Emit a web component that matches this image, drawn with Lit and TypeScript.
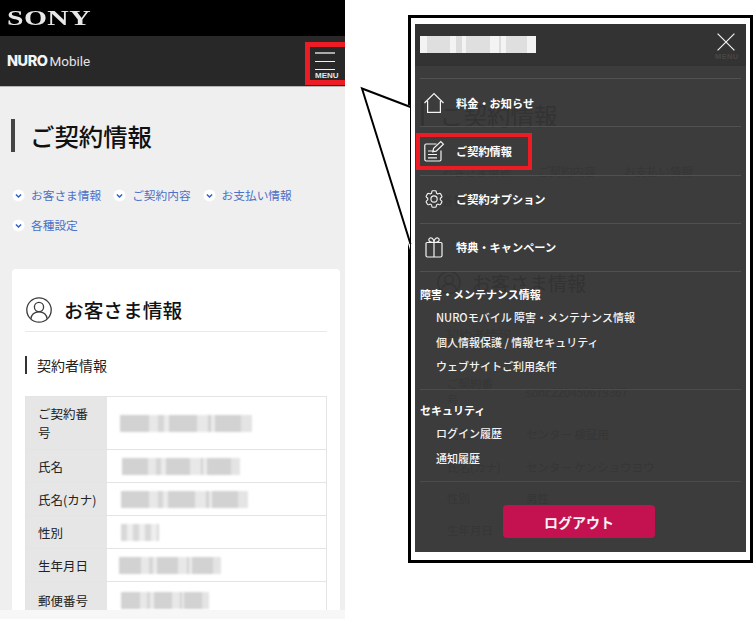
import { LitElement, html, css, svg } from "lit";
import { customElement } from "lit/decorators.js";

const chevron = html`<svg class="chev" viewBox="0 0 14 14"><circle cx="7" cy="7" r="6.5" fill="#fff"/><path d="M4.2 5.8 7 8.6l2.8-2.8" fill="none" stroke="#2a5fc8" stroke-width="1.5"/></svg>`;

const person = html`<svg class="person" viewBox="0 0 26 26" fill="none" stroke="#3c3c3c" stroke-width="1.3"><circle cx="13" cy="13" r="12.2"/><circle cx="13" cy="10" r="4.6"/><path d="M4.8 22c.6-4.6 4-7.2 8.2-7.2s7.6 2.6 8.2 7.2"/></svg>`;

const icons: Record<string, unknown> = {
  home: svg`<path d="M1.5 11 11 1.600 20.500 11M4.600 9v11.400h12.800V9"/>`,
  edit: svg`<path d="M13.500 4H3.200A1.400 1.400 0 0 0 1.800 5.400v14.200A1.400 1.400 0 0 0 3.200 21h13.400a1.400 1.400 0 0 0 1.400-1.400V10.500M5 11h6M5 14.500h9M5 17.800h9"/><path d="M9.800 11.800l.8-3.400 7.200-6.800 2.600 2.600-7.200 6.900z"/>`,
  gear: svg`<g transform="scale(.92)"><path d="M9.594 3.94c.09-.542.56-.94 1.11-.94h2.593c.55 0 1.02.398 1.11.94l.213 1.281c.063.374.313.686.645.87.074.04.147.083.22.127.325.196.72.257 1.075.124l1.217-.456a1.125 1.125 0 0 1 1.37.49l1.296 2.247a1.125 1.125 0 0 1-.26 1.431l-1.003.827c-.293.241-.438.613-.43.992a7.723 7.723 0 0 1 0 .255c-.008.378.137.75.43.991l1.004.827c.424.35.534.955.26 1.43l-1.298 2.247a1.125 1.125 0 0 1-1.369.491l-1.217-.456c-.355-.133-.75-.072-1.076.124a6.47 6.47 0 0 1-.22.128c-.331.183-.581.495-.644.869l-.213 1.281c-.09.543-.56.94-1.11.94h-2.594c-.55 0-1.019-.398-1.11-.94l-.213-1.281c-.062-.374-.312-.686-.644-.87a6.52 6.52 0 0 1-.22-.127c-.325-.196-.72-.257-1.076-.124l-1.217.456a1.125 1.125 0 0 1-1.369-.49l-1.297-2.247a1.125 1.125 0 0 1 .26-1.431l1.004-.827c.292-.24.437-.613.43-.991a6.932 6.932 0 0 1 0-.255c.007-.38-.138-.751-.43-.992l-1.004-.827a1.125 1.125 0 0 1-.26-1.43l1.297-2.247a1.125 1.125 0 0 1 1.37-.491l1.216.456c.356.133.751.072 1.076-.124.072-.044.146-.086.22-.128.332-.183.582-.495.644-.869l.214-1.28Z"/><circle cx="12" cy="12" r="3.400"/></g>`,
  gift: svg`<path d="M4 6.500h14a1 1 0 0 1 1 1v12a1.500 1.500 0 0 1-1.500 1.500h-13A1.500 1.500 0 0 1 3 19.500v-12a1 1 0 0 1 1-1ZM11 6.500V21M11 6.500C9 6.500 5.800 6.500 5.800 3.800 5.800 1.800 8 1.400 9.200 2.300 10.500 3.200 11 5 11 6.500ZM11 6.500c2 0 5.200 0 5.200-2.700 0-2-2.200-2.400-3.400-1.500C11.500 3.200 11 5 11 6.500Z"/>`,
};

const navItems = [
  ["home", "料金・お知らせ"],
  ["edit", "ご契約情報"],
  ["gear", "ご契約オプション"],
  ["gift", "特典・キャンペーン"],
];

const rows: [string, number, number, number][] = [
  ["ご契約番号", 132, 13, 52],
  ["氏名", 118, 15, 32],
  ["氏名(カナ)", 127, 14, 32],
  ["性別", 38, 14, 32],
  ["生年月日", 102, 12, 32],
  ["郵便番号", 88, 14, 36],
];

const ghosts: [string, number, number, string][] = [
  ["ご契約情報", 440, 115, "big"],
  ["お客さま情報", 442, 171, "sm"],
  ["ご契約内容", 538, 171, "sm"],
  ["お支払い情報", 624, 171, "sm"],
  ["各種設定", 442, 200, "sm"],
  ["お客さま情報", 472, 282, "mid"],
  ["契約者情報", 446, 334, "sm2"],
  ["ご契約番", 447, 383, "sm"],
  ["号", 447, 400, "sm"],
  ["sonc220450679367", 526, 392, "sm"],
  ["氏名", 447, 434, "sm"],
  ["センター 検証用", 526, 434, "sm"],
  ["氏名(カナ)", 447, 467, "sm"],
  ["センター ケンショウヨウ", 526, 467, "sm"],
  ["性別", 447, 498, "sm"],
  ["男性", 526, 498, "sm"],
  ["生年月日", 447, 530, "sm"],
];

@customElement("app-root")
export class AppRoot extends LitElement {
  static styles = css`
    :host { display: block; width: 754px; height: 619px; background: #fff; overflow: hidden; position: relative; font-family: "Noto Sans CJK JP", "Noto Sans", sans-serif; }
    .root { display: grid; grid-template-columns: 345px 1fr; height: 619px; }

    .phone { height: 610px; overflow: hidden; background: #efefef; display: flex; flex-direction: column; }
    .sony { flex: none; height: 36px; background: #000; display: flex; align-items: center; padding-left: 7px; }
    .sony span { font: bold 20px "Liberation Serif", serif; color: #e8e8e8; transform: scaleX(1.48); transform-origin: left center; letter-spacing: .3px; }
    .nuro { flex: none; height: 50px; background: #282828; border-bottom: 1px solid #b5b5b5; display: flex; align-items: flex-end; justify-content: space-between; box-sizing: content-box; }
    .logo { align-self: center; padding-left: 7px; margin-top: -2px; color: #e4e4e4; font: 13.500px Roboto, sans-serif; display: flex; align-items: baseline; gap: 2px; }
    .logo b { font: 800 14.500px Inter, sans-serif; letter-spacing: -.5px; color: #f4f4f4; }
    .menu { width: 30px; height: 28px; border: 5px solid #ed1c24; border-right-width: 0; padding-right: 5px; margin-bottom: 1px; background: #282828; display: flex; flex-direction: column; align-items: center; padding-top: 5px; box-sizing: content-box; gap: 7px; position: relative; }
    .menu i { display: block; width: 20px; height: 1px; background: #f0f0f0; flex: none; }
    .menu i:first-child { background: #aaa; height: 2px; }
    .menu em { position: absolute; bottom: 0; left: 5px; font: bold 8px "Liberation Sans", sans-serif; font-style: normal; color: #dfe8ee; line-height: 9px; }

    .title { margin: 32px 0 0 11px; border-left: 4px solid #444; height: 33px; padding-left: 16px; font-size: 24.400px; font-weight: 500; line-height: 33px; color: #111; text-indent: -1px; }
    .links { margin: 34px 0 0 12px; display: flex; flex-wrap: wrap; row-gap: 12px; column-gap: 12px; width: 310px; }
    .links a { display: flex; align-items: center; gap: 6px; font-size: 11.700px; line-height: 18px; color: #4a70c8; }
    .chev { width: 13px; height: 13px; }

    .card { margin: 35px 5px 0 12px; background: #fff; border-radius: 4px 4px 0 0; padding: 28px 13px 0; flex: 1; min-height: 0; }
    .card-head { display: flex; align-items: flex-start; gap: 12px; padding-left: 1px; border-bottom: 1px solid #e9e9e9; box-sizing: content-box; height: 34px; }
    .person { width: 26px; height: 26px; flex: none; }
    .card-head span { font-size: 19.700px; font-weight: 500; color: #111; line-height: 26px; }
    .sub { margin-top: 24px; border-left: 2px solid #333; height: 18px; padding-left: 10px; font-size: 14px; line-height: 18px; color: #222; }
    .table { margin-top: 22px; border: 1px solid #e4e4e4; border-bottom: 0; }
    .row { display: grid; grid-template-columns: 81px 1fr; border-bottom: 1px solid #e4e4e4; }
    .th { background: #e6e6e6; padding: 0 10px 0 12px; font-size: 12.500px; line-height: 19px; color: #222; display: flex; align-items: center; }
    .td { display: flex; align-items: center; }
    .blur { display: block; height: 17px; filter: blur(1.300px);
      background: linear-gradient(90deg, #d2d2d2 0 22%, #e8e8e8 22% 29%, #d6d6d6 29% 33%, #ebebeb 33% 37%, #d2d2d2 37% 58%, #e8e8e8 58% 67%, #d2d2d2 67% 69%, #ebebeb 69% 72%, #d2d2d2 72% 92%, #e4e4e4 92% 100%); }
    .blur.short { background: repeating-linear-gradient(90deg, #d8d8d8 0 6px, #eeeeee 6px 12px); }

    .box { margin: 15px 1px 0 63px; height: 548px; box-sizing: border-box; border: 3px solid #000; padding: 6px 4px 8px 4px; background: #fff; }
    .panel { height: 100%; width: 331px; background: #3c3c3c; display: flex; flex-direction: column; position: relative; overflow: hidden; }
    .p-head { flex: none; height: 42px; background: #333; display: flex; align-items: center; justify-content: space-between; position: relative; z-index: 1; }
    .p-name { margin: -1px 0 0 5px; width: 116px; height: 17px; filter: blur(.6px); background: linear-gradient(90deg, #f3f3f3 0 6%, #dfdfdf 6% 26%, #f3f3f3 26% 31%, #dcdcdc 31% 36%, #f3f3f3 36% 40%, #dfdfdf 40% 60%, #f3f3f3 60% 68%, #dcdcdc 68% 70%, #f3f3f3 70% 74%, #dfdfdf 74% 92%, #f3f3f3 92% 100%); }
    .close { position: relative; width: 30px; height: 42px; margin-right: 8px; }
    .close svg { position: absolute; left: 9px; top: 9px; width: 18px; height: 18px; }
    .close em { position: absolute; left: 7px; top: 28px; font: bold 7.500px "Liberation Sans", sans-serif; letter-spacing: .4px; color: #474747; }

    .nav { margin: 12px 5px 0; position: relative; z-index: 1; border-top: 1px solid #515151; flex: none; }
    .nav-item { height: 47.250px; border-bottom: 1px solid #515151; display: flex; align-items: center; color: #fff; font-size: 11.200px; font-weight: 700; padding-left: 3px; box-sizing: content-box; }
    .nav-item svg { width: 22px; height: 22px; margin-right: 11px; fill: none; stroke: #f4f4f4; stroke-width: 1.200; flex: none; }
    .section { margin: 0 5px; border-bottom: 1px solid #4c4c4c; position: relative; z-index: 1; color: #fff; padding-top: 13px; box-sizing: content-box; height: 104px; }
    .section.sec2 { height: 80px; padding-top: 11px; }
    .section h3 { margin: 0 0 2px; font-size: 11px; line-height: 18px; font-weight: 700; }
    .section p { margin: 0 0 0 16px; font-size: 11px; line-height: 24.500px; font-weight: 500; color: #f4f4f4; white-space: nowrap; }
    .logout { position: relative; z-index: 1; margin: 23px auto 0 88px; width: 152px; height: 33px; border-radius: 4px; background: #c41150; color: #f5f5f5; font-size: 14px; font-weight: 700; display: flex; align-items: center; justify-content: center; }
    .hl { position: absolute; left: 1px; top: 109px; width: 116px; height: 37px; box-sizing: border-box; border: 4px solid #ed1c24; z-index: 2; }

    .ghost { position: absolute; white-space: nowrap; color: #333; transform: translateY(-50%); }
    .ghost.big { font-size: 23.500px; }
    .ghost.sm { font-size: 11.500px; color: #363636; }
    .ghost.sm2 { font-size: 13px; color: #363636; }
    .ghost.mid { font-size: 19px; }
    .g-bar { position: absolute; left: 6px; top: 76px; width: 3px; height: 27px; background: #333; }
    .g-person { position: absolute; left: 22px; top: 246px; width: 24px; height: 25px; }

    .tail { position: absolute; left: 355px; top: 80px; width: 62px; height: 170px; }
    .strip { position: absolute; left: 0; top: 610px; width: 345px; height: 9px; background: #f7f7f7; }
  `;

  render() {
    return html`
      <div class="root">
        <div class="phone">
          <div class="sony"><span>SONY</span></div>
          <div class="nuro">
            <div class="logo"><b>NURO</b><span>Mobile</span></div>
            <div class="menu"><i></i><i></i><i></i><em>MENU</em></div>
          </div>
          <div class="title">ご契約情報</div>
          <div class="links">
            ${["お客さま情報", "ご契約内容", "お支払い情報", "各種設定"].map((t) => html`<a>${chevron}${t}</a>`)}
          </div>
          <div class="card">
            <div class="card-head">${person}<span>お客さま情報</span></div>
            <div class="sub">契約者情報</div>
            <div class="table">
              ${rows.map(([label, w, x, h]) => html`
                <div class="row" style="height:${h}px">
                  <div class="th">${label}</div>
                  <div class="td"><span class="blur ${w < 50 ? "short" : ""}" style="width:${w}px;margin-left:${x}px"></span></div>
                </div>`)}
            </div>
          </div>
        </div>

        <div class="box">
          <div class="panel">
            ${ghosts.map(([t, x, y, c]) => html`<span class="ghost ${c}" style="left:${x - 415}px;top:${y - 24}px">${t}</span>`)}
            <div class="g-bar"></div>
            <svg class="g-person" viewBox="0 0 26 26" fill="none" stroke="#333" stroke-width="1.300"><circle cx="13" cy="13" r="12"/><circle cx="13" cy="10" r="4.600"/><path d="M4.800 22c.6-4.600 4-7.200 8.200-7.200s7.600 2.600 8.200 7.200"/></svg>

            <div class="p-head">
              <div class="p-name"></div>
              <div class="close">
                <svg viewBox="0 0 18 18" fill="none" stroke="#f2f2f2" stroke-width="1.200"><path d="M.6.6l16.800 16.800M17.400.6.6 17.400"/></svg>
                <em>MENU</em>
              </div>
            </div>
            <div class="nav">
              ${navItems.map(([ic, t]) => html`<div class="nav-item"><svg viewBox="0 0 22 22">${icons[ic]}</svg>${t}</div>`)}
            </div>
            <div class="section">
              <h3>障害・メンテナンス情報</h3>
              <p>NUROモバイル 障害・メンテナンス情報</p>
              <p>個人情報保護 / 情報セキュリティ</p>
              <p>ウェブサイトご利用条件</p>
            </div>
            <div class="section sec2">
              <h3>セキュリティ</h3>
              <p>ログイン履歴</p>
              <p>通知履歴</p>
            </div>
            <div class="logout">ログアウト</div>
            <div class="hl"></div>
          </div>
        </div>
      </div>
      <svg class="tail" viewBox="0 0 62 170">
        <path d="M55 25.500 7 8l48 162z" fill="#fff"/>
        <path d="M55.500 27 7 8.500 55.500 164" fill="none" stroke="#000" stroke-width="2"/>
      </svg>
      <div class="strip"></div>
    `;
  }
}
